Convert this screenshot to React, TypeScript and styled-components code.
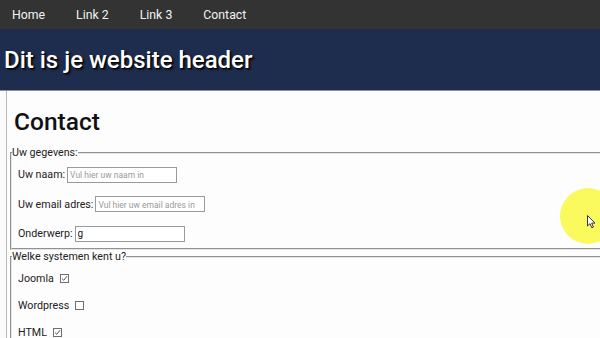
import styled, { createGlobalStyle } from "styled-components";

const GlobalStyle = createGlobalStyle`
  html, body {
    margin: 0;
    padding: 0;
    width: 600px;
    height: 338px;
    overflow: hidden;
    background: #fbfbfb;
    font-family: Roboto, "Liberation Sans", sans-serif;
  }
`;

const Page = styled.div`
  position: relative;
  width: 600px;
  height: 338px;
  overflow: hidden;
`;

const Nav = styled.nav`
  display: flex;
  align-items: center;
  height: 29px;
  padding-left: 12px;
  gap: 31px;
  background: #333333;
`;

const NavLink = styled.a`
  color: #f2f2f2;
  font-size: 12.3px;
  text-decoration: none;
`;

const Header = styled.header`
  display: flex;
  align-items: center;
  height: 61px;
  padding-left: 4px;
  background: #1e2d4e;
  border-bottom: 1px solid #8a8f99;
`;

const SiteTitle = styled.h1`
  margin: 0;
  color: #ffffff;
  font-size: 24px;
  font-weight: 500;
  text-shadow: 1px 1px 1px #000, 2px 2px 2px rgba(0, 0, 0, 0.6);
`;

const Main = styled.main`
  margin-left: 6px;
  border-left: 1px solid #b8b8b8;
  padding-left: 3px;
  height: 300px;
  background: #fdfdfd;
`;

const PageTitle = styled.h2`
  margin: 0;
  padding: 16px 0 9px 4px;
  font-size: 24.5px;
  line-height: 30px;
  font-weight: 500;
  color: #111;
`;

const Fieldset = styled.fieldset<{ $bottom: number }>`
  width: 700px;
  margin: 0;
  padding: 0 0 ${(p) => p.$bottom}px 0;
  border: 2px groove #e4e4e4;
  border-right: none;
`;

const Legend = styled.legend`
  padding: 0;
  font-size: 10.7px;
  line-height: 13px;
  color: #222;
`;

const Rows = styled.div<{ $gap: number; $top: number }>`
  display: flex;
  flex-direction: column;
  gap: ${(p) => p.$gap}px;
  padding: ${(p) => p.$top}px 0 0 6px;
`;

const Row = styled.label`
  display: flex;
  align-items: center;
  gap: 2px;
  height: 15px;
  font-size: 10.7px;
  color: #222;
`;

const TextInput = styled.input`
  box-sizing: border-box;
  width: 110px;
  height: 16px;
  margin: 0;
  padding: 0 2px;
  border: 1px solid #9a9a9a;
  font-family: Roboto, "Liberation Sans", sans-serif;
  font-size: 10px;
  color: #111;
  background: #fff;
  outline: none;
  &::placeholder {
    color: #9a9a9a;
    font-size: 8.5px;
  }
`;

const CheckRow = styled.div`
  display: flex;
  align-items: center;
  gap: 6px;
  height: 13px;
  font-size: 10.7px;
  color: #222;
`;

const Box = styled.span`
  display: inline-flex;
  width: 9px;
  height: 9px;
  box-sizing: border-box;
  border: 1px solid #6e6e6e;
  background: #fff;
`;

const Highlight = styled.div`
  position: absolute;
  left: 560px;
  top: 188px;
  width: 56px;
  height: 56px;
  border-radius: 50%;
  background: rgba(250, 250, 80, 0.92);
`;

const Cursor = styled.svg`
  position: absolute;
  left: 587px;
  top: 215px;
`;

function CheckBox({ checked }: { checked: boolean }) {
  return (
    <Box>
      {checked && (
        <svg width="7" height="7" viewBox="0 0 7 7">
          <path d="M1 3.6 L2.8 5.3 L6 1.2" fill="none" stroke="#555" strokeWidth="1" />
        </svg>
      )}
    </Box>
  );
}

export default function App() {
  return (
    <Page>
      <GlobalStyle />
      <Nav>
        <NavLink href="#">Home</NavLink>
        <NavLink href="#">Link 2</NavLink>
        <NavLink href="#">Link 3</NavLink>
        <NavLink href="#">Contact</NavLink>
      </Nav>
      <Header>
        <SiteTitle>Dit is je website header</SiteTitle>
      </Header>
      <Main>
        <PageTitle>Contact</PageTitle>
        <Fieldset $bottom={7}>
          <Legend>Uw gegevens:</Legend>
          <Rows $gap={14.5} $top={8}>
            <Row>
              Uw naam: <TextInput placeholder="Vul hier uw naam in" />
            </Row>
            <Row>
              Uw email adres: <TextInput placeholder="Vul hier uw email adres in" />
            </Row>
            <Row>
              Onderwerp: <TextInput defaultValue="g" />
            </Row>
          </Rows>
        </Fieldset>
        <Fieldset $bottom={20}>
          <Legend>Welke systemen kent u?</Legend>
          <Rows $gap={14} $top={9}>
            <CheckRow>
              Joomla <CheckBox checked />
            </CheckRow>
            <CheckRow>
              Wordpress <CheckBox checked={false} />
            </CheckRow>
            <CheckRow>
              HTML <CheckBox checked />
            </CheckRow>
          </Rows>
        </Fieldset>
      </Main>
      <Highlight />
      <Cursor width="10" height="14" viewBox="0 0 10 14">
        <path d="M0.5 0.5 L0.5 11 L3 8.6 L4.8 12.8 L6.4 12.1 L4.7 8.1 L8 8.1 Z" fill="#fff" stroke="#333" strokeWidth="1" />
      </Cursor>
    </Page>
  );
}
